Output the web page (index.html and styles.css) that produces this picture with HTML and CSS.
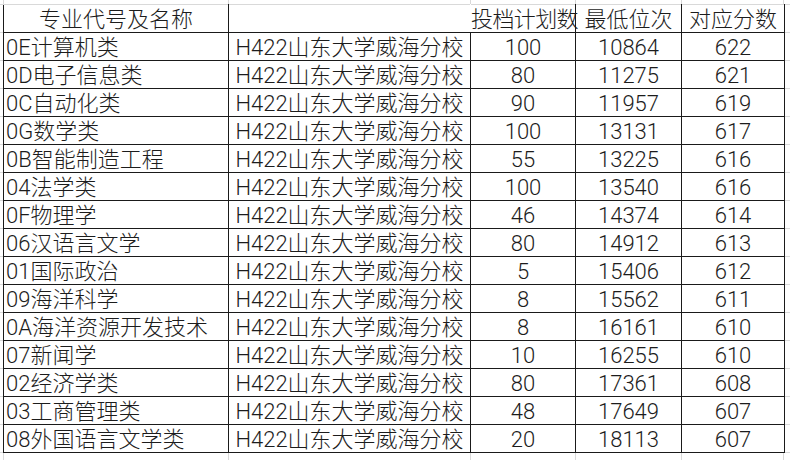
FILE: index.html
```html
<!DOCTYPE html>
<html lang="zh-CN">
<head>
<meta charset="utf-8">
<title>山东大学威海分校 投档情况</title>
<link rel="stylesheet" href="styles.css">
</head>
<body>
<div class="sheet">
<table class="grid">
  <colgroup>
    <col class="c-major">
    <col class="c-school">
    <col class="c-plan">
    <col class="c-rank">
    <col class="c-score">
  </colgroup>
  <thead>
    <tr class="head">
      <th class="h-major">专业代号及名称</th>
      <th class="h-school"></th>
      <th class="h-plan">投档计划数</th>
      <th>最低位次</th>
      <th>对应分数</th>
    </tr>
  </thead>
  <tbody>
    <tr><td class="major">0E计算机类</td><td class="school">H422山东大学威海分校</td><td>100</td><td>10864</td><td>622</td></tr>
    <tr><td class="major">0D电子信息类</td><td class="school">H422山东大学威海分校</td><td>80</td><td>11275</td><td>621</td></tr>
    <tr><td class="major">0C自动化类</td><td class="school">H422山东大学威海分校</td><td>90</td><td>11957</td><td>619</td></tr>
    <tr><td class="major">0G数学类</td><td class="school">H422山东大学威海分校</td><td>100</td><td>13131</td><td>617</td></tr>
    <tr><td class="major">0B智能制造工程</td><td class="school">H422山东大学威海分校</td><td>55</td><td>13225</td><td>616</td></tr>
    <tr><td class="major">04法学类</td><td class="school">H422山东大学威海分校</td><td>100</td><td>13540</td><td>616</td></tr>
    <tr><td class="major">0F物理学</td><td class="school">H422山东大学威海分校</td><td>46</td><td>14374</td><td>614</td></tr>
    <tr><td class="major">06汉语言文学</td><td class="school">H422山东大学威海分校</td><td>80</td><td>14912</td><td>613</td></tr>
    <tr><td class="major">01国际政治</td><td class="school">H422山东大学威海分校</td><td>5</td><td>15406</td><td>612</td></tr>
    <tr><td class="major">09海洋科学</td><td class="school">H422山东大学威海分校</td><td>8</td><td>15562</td><td>611</td></tr>
    <tr><td class="major">0A海洋资源开发技术</td><td class="school">H422山东大学威海分校</td><td>8</td><td>16161</td><td>610</td></tr>
    <tr><td class="major">07新闻学</td><td class="school">H422山东大学威海分校</td><td>10</td><td>16255</td><td>610</td></tr>
    <tr><td class="major">02经济学类</td><td class="school">H422山东大学威海分校</td><td>80</td><td>17361</td><td>608</td></tr>
    <tr><td class="major">03工商管理类</td><td class="school">H422山东大学威海分校</td><td>48</td><td>17649</td><td>607</td></tr>
    <tr><td class="major">08外国语言文学类</td><td class="school">H422山东大学威海分校</td><td>20</td><td>18113</td><td>607</td></tr>
  </tbody>
</table>
</div>
</body>
</html>
```

FILE: styles.css
```css
html, body {
  margin: 0;
  padding: 0;
  height: 100%;
}

body {
  background-color: #ffffff;
  background-image:
    linear-gradient(#d9d9d9, #d9d9d9),
    linear-gradient(#d9d9d9, #d9d9d9),
    linear-gradient(#d9d9d9, #d9d9d9),
    linear-gradient(#d9d9d9, #d9d9d9),
    linear-gradient(#d9d9d9, #d9d9d9),
    linear-gradient(#d9d9d9, #d9d9d9),
    linear-gradient(to bottom, #d9d9d9 1px, transparent 1px);
  background-size:
    1px 100%,
    1px 100%,
    1px 100%,
    1px 100%,
    1px 100%,
    1px 100%,
    100% 28px;
  background-position:
    3px 0,
    228px 0,
    470px 0,
    575px 0,
    681px 0,
    783px 0,
    0 4px;
  background-repeat:
    no-repeat, no-repeat, no-repeat, no-repeat, no-repeat, no-repeat, repeat;
  font-family: Roboto, "Noto Sans CJK SC", "Microsoft YaHei", sans-serif;
  font-weight: 300;
  color: #1c1c1c;
}

.sheet {
  padding: 4px 0 0 3px;
}

.grid {
  border-collapse: collapse;
  table-layout: fixed;
  width: 781px;
  background: #ffffff;
  font-size: 22px;
}

.c-major { width: 225px; }
.c-school { width: 242px; }
.c-plan { width: 105px; }
.c-rank { width: 106px; }
.c-score { width: 103px; }

.grid tr {
  height: 28px;
}

.grid th,
.grid td {
  padding: 2px 0 0 0;
  line-height: 25px;
  text-align: center;
  vertical-align: bottom;
  white-space: nowrap;
  overflow: visible;
  border: 1px solid #1a1a1a;
  font-weight: 300;
}

.head th {
  border-top-color: #d9d9d9;
}

.head .h-school {
  border-right-color: #ffffff;
}

.head .h-plan {
  border-left-color: #ffffff;
  letter-spacing: -0.6px;
}

.grid td.major {
  text-align: left;
  padding-left: 2px;
}

.grid td.school {
  text-align: center;
}
```
